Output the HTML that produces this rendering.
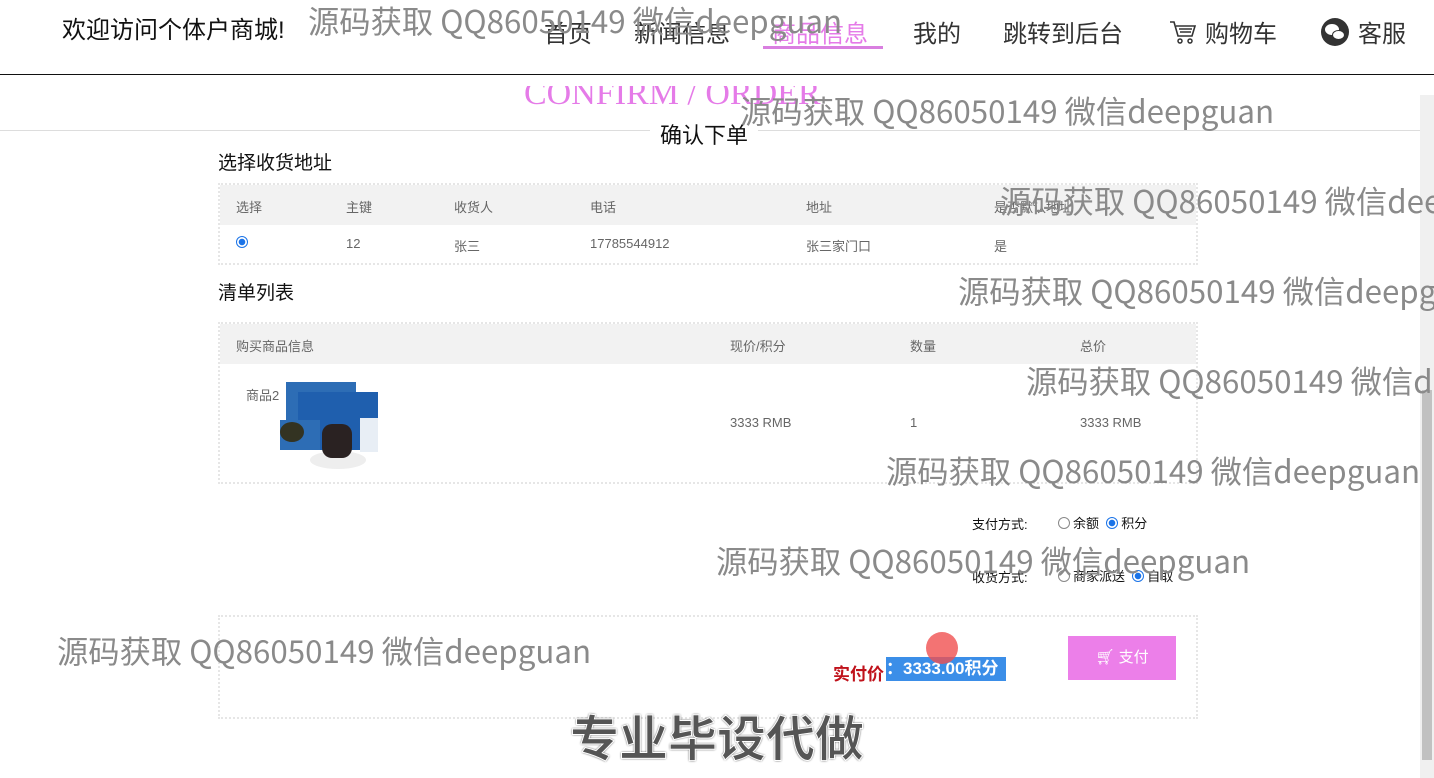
<!DOCTYPE html>
<html><head><meta charset="utf-8"><style>
*{margin:0;padding:0;box-sizing:border-box}
body{width:1434px;height:778px;overflow:hidden;background:#fff;font-family:"Liberation Sans","Noto Sans CJK SC",sans-serif;position:relative;color:#333}
.a{position:absolute;white-space:nowrap}
.nav{font-size:24px;color:#333;top:14px}
.wm{font-size:31.3px;color:#8a8a8a;font-family:"Noto Sans CJK SC",sans-serif;font-weight:400;line-height:36px}
.tb{position:absolute;left:218px;width:980px;border:2px dotted #e6e6e6}
.hd{background:#f2f2f2;height:40px}
.c{position:absolute;font-size:13px;color:#666}
.radio{display:inline-block;width:12px;height:12px;border-radius:50%;border:1px solid #888;vertical-align:-1px;margin-right:3px}
.on{border:1px solid #1a73e8;background:radial-gradient(circle,#1a73e8 0 3px,#fff 3.5px)}
</style></head><body>
<div class="a" style="left:62px;top:10px;font-size:24px;color:#111">欢迎访问个体户商城!</div>
<div class="a nav" style="left:544px">首页</div>
<div class="a nav" style="left:634px">新闻信息</div>
<div class="a nav" style="left:772px;color:#e57be8">商品信息</div>
<div class="a" style="left:763px;top:46px;width:120px;height:3px;background:#d97fe0"></div>
<div class="a nav" style="left:913px">我的</div>
<div class="a nav" style="left:1003px">跳转到后台</div>
<svg class="a" style="left:1168px;top:19px" width="30" height="26" viewBox="0 0 30 26"><path d="M2 3h4l4 14h14l3-10H8" fill="none" stroke="#333" stroke-width="1.6"/><circle cx="12" cy="22" r="2" fill="none" stroke="#333" stroke-width="1.5"/><circle cx="22" cy="22" r="2" fill="none" stroke="#333" stroke-width="1.5"/><path d="M11 10h13M12 13h11" stroke="#333" stroke-width="1.4"/></svg>
<div class="a nav" style="left:1205px">购物车</div>
<svg class="a" style="left:1320px;top:17px" width="30" height="30" viewBox="0 0 30 30"><circle cx="15" cy="15" r="14" fill="#333"/><ellipse cx="12" cy="12.5" rx="7" ry="5.5" fill="#fff"/><ellipse cx="18.5" cy="18" rx="6" ry="4.5" fill="#fff" stroke="#333"/></svg>
<div class="a nav" style="left:1358px">客服</div>
<div class="a" style="left:0;top:74px;width:1434px;height:1px;background:#111"></div>

<div class="a" style="left:524px;top:86px;height:22px;overflow:hidden"><div style="margin-top:-12px;font-size:34px;font-family:'Liberation Serif',serif;color:#e57be8;line-height:40px">CONFIRM / ORDER</div></div>
<div class="a" style="left:0;top:130px;width:1420px;height:1px;background:#ddd"></div>
<div class="a" style="left:650px;top:118px;background:#fff;padding:0 10px;font-size:22px;color:#111">确认下单</div>
<div class="a" style="left:1420px;top:95px;width:14px;height:683px;background:#f0f0f0"></div>
<div class="a" style="left:1422px;top:390px;width:10px;height:370px;background:#c1c1c1"></div>

<div class="a" style="left:218px;top:148px;font-size:19px;color:#111">选择收货地址</div>
<div class="tb" style="top:183px;height:82px">
<div class="hd"></div>
<div class="c" style="left:16px;top:12px">选择</div><div class="c" style="left:126px;top:12px">主键</div><div class="c" style="left:234px;top:12px">收货人</div><div class="c" style="left:370px;top:12px">电话</div><div class="c" style="left:586px;top:12px">地址</div><div class="c" style="left:774px;top:12px">是否默认地址</div>
<div class="c" style="left:16px;top:50px"><span class="radio on"></span></div><div class="c" style="left:126px;top:51px">12</div><div class="c" style="left:234px;top:51px">张三</div><div class="c" style="left:370px;top:51px">17785544912</div><div class="c" style="left:586px;top:51px">张三家门口</div><div class="c" style="left:774px;top:51px">是</div>
</div>
<div class="a" style="left:218px;top:278px;font-size:19px;color:#111">清单列表</div>
<div class="tb" style="top:322px;height:162px">
<div class="hd"></div>
<div class="c" style="left:16px;top:12px">购买商品信息</div><div class="c" style="left:510px;top:12px">现价/积分</div><div class="c" style="left:690px;top:12px">数量</div><div class="c" style="left:860px;top:12px">总价</div>
<div class="c" style="left:26px;top:61px">商品2</div>
<svg class="a" style="left:60px;top:56px" width="104" height="90" viewBox="0 0 104 90"><rect x="6" y="2" width="70" height="45" fill="#2d6db5"/><rect x="18" y="12" width="80" height="58" fill="#1f5fae"/><rect x="0" y="40" width="40" height="30" fill="#2d6db5"/><ellipse cx="58" cy="80" rx="28" ry="9" fill="#eee"/><rect x="42" y="44" width="30" height="34" rx="10" fill="#2a2222"/><rect x="80" y="38" width="18" height="34" fill="#e8eef5"/><ellipse cx="12" cy="52" rx="12" ry="10" fill="#332"/></svg>
<div class="c" style="left:510px;top:91px">3333 RMB</div><div class="c" style="left:690px;top:91px">1</div><div class="c" style="left:860px;top:91px">3333 RMB</div>
</div>
<div class="a" style="left:972px;top:514px;font-size:13px;color:#111">支付方式:</div>
<div class="a" style="left:1058px;top:513px;font-size:13px;color:#111"><span class="radio"></span>余额&nbsp; <span class="radio on"></span>积分</div>
<div class="a" style="left:972px;top:567px;font-size:13px;color:#111">收货方式:</div>
<div class="a" style="left:1058px;top:566px;font-size:13px;color:#111"><span class="radio"></span>商家派送&nbsp; <span class="radio on"></span>自取</div>
<div class="tb" style="top:615px;height:104px"></div>
<div class="a" style="left:833px;top:660px;font-size:17px;font-weight:bold;color:#c0121b">实付价</div>
<div class="a" style="left:886px;top:657px;height:24px;width:120px;background:#3b8ee8;color:#fff;font-size:17px;font-weight:bold;line-height:24px">：3333.00积分</div>
<div class="a" style="left:926px;top:632px;width:32px;height:32px;border-radius:50%;background:rgba(240,80,80,.8)"></div>
<div class="a" style="left:1068px;top:636px;width:108px;height:44px;background:#ec7fe9;color:#fff;font-size:15px;line-height:44px;text-align:center">🛒︎ 支付</div>
<div class="a" style="left:570px;top:706px;font-size:49px;font-weight:bold;font-family:'WenQuanYi Zen Hei','Noto Sans CJK SC',sans-serif;color:#555;-webkit-text-stroke:1px #fff;text-shadow:0 0 2px #000;line-height:60px">专业毕设代做</div>

<div class="a wm" style="left:308px;top:3px">源码获取 QQ86050149 微信deepguan</div>
<div class="a wm" style="left:740px;top:93px">源码获取 QQ86050149 微信deepguan</div>
<div class="a wm" style="left:1000px;top:183px">源码获取 QQ86050149 微信deepguan</div>
<div class="a wm" style="left:958px;top:273px">源码获取 QQ86050149 微信deepguan</div>
<div class="a wm" style="left:1026px;top:363px">源码获取 QQ86050149 微信deepguan</div>
<div class="a wm" style="left:886px;top:453px">源码获取 QQ86050149 微信deepguan</div>
<div class="a wm" style="left:716px;top:543px">源码获取 QQ86050149 微信deepguan</div>
<div class="a wm" style="left:57px;top:633px">源码获取 QQ86050149 微信deepguan</div>
</body></html>
